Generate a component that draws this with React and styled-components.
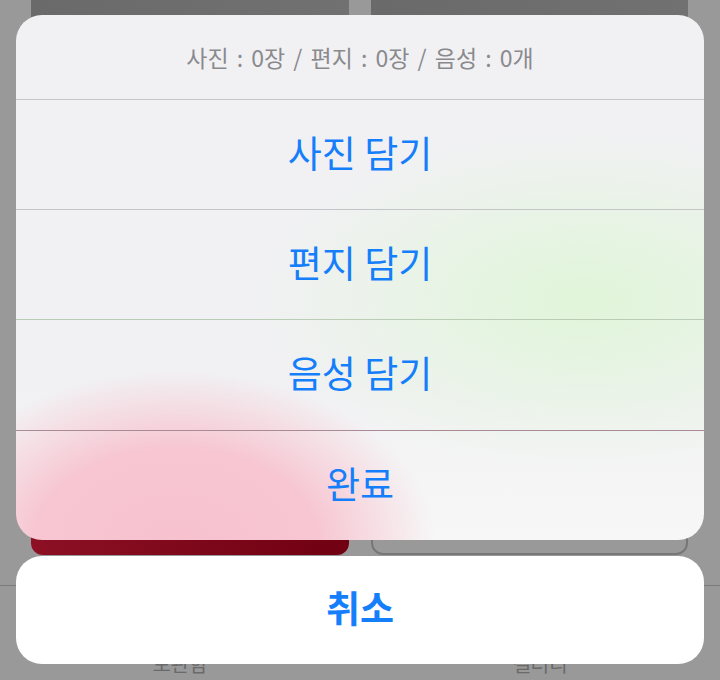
import React from 'react';
import styled, { createGlobalStyle } from 'styled-components';

const GlobalStyle = createGlobalStyle`
  html, body {
    margin: 0;
    padding: 0;
    background: #999999;
  }

  body {
    font-family: "Noto Sans CJK KR", "Noto Sans", sans-serif;
  }

  * {
    box-sizing: border-box;
  }
`;

const Screen = styled.div`
  position: relative;
  width: 720px;
  height: 680px;
  overflow: hidden;
  background: #999999;
`;

// dimmed app content behind the sheet
const Backdrop = styled.div`
  height: 100%;
  display: flex;
  flex-direction: column;
`;

const CardRow = styled.div`
  display: grid;
  grid-template-columns: 318px 317px;
  column-gap: 22px;
  padding: 0 32px 0 31px;
`;

const TopCard = styled.div`
  height: 40px;
  background: linear-gradient(90deg, #6a6a6a, #717171);
`;

const Filler = styled.div`
  flex: 1;
`;

const ActionRow = styled.div`
  display: grid;
  grid-template-columns: 318px 317px;
  column-gap: 22px;
  padding: 0 32px 0 31px;
`;

const RedButton = styled.div`
  height: 60px;
  border-radius: 12px;
  background: linear-gradient(90deg, #8d1024, #700012);
`;

const GhostButton = styled.div`
  height: 60px;
  border-radius: 12px;
  border: 2px solid #777777;
  background: #999999;
`;

const TabBar = styled.div`
  margin-top: 30px;
  height: 95px;
  border-top: 1px solid #7c7c7c;
  display: grid;
  grid-template-columns: 1fr 1fr;
`;

const TabLabel = styled.div`
  padding-top: 66px;
  text-align: center;
  font-size: 20px;
  line-height: 24px;
  color: #6a6a6a;
`;

const Sheet = styled.div`
  position: absolute;
  left: 16px;
  right: 16px;
  top: 15px;
  display: flex;
  flex-direction: column;
  gap: 16px;
`;

const Group = styled.div`
  border-radius: 26px;
  overflow: hidden;
  background:
    radial-gradient(ellipse 260px 175px at 160px 530px, rgba(247, 193, 206, 1), rgba(247, 193, 206, 0.9) 55%, rgba(247, 193, 206, 0) 100%),
    radial-gradient(ellipse 330px 170px at 570px 285px, rgba(222, 246, 214, 0.9), rgba(222, 246, 214, 0) 100%),
    linear-gradient(180deg, #f1f1f3 0%, #f1f1f3 70%, #f7f7f7 100%);
  display: flex;
  flex-direction: column;
`;

const Header = styled.div`
  height: 84px;
  display: flex;
  align-items: center;
  justify-content: center;
  font-size: 23px;
  word-spacing: 3px;
  color: #8a8a8e;
`;

const Option = styled.div`
  height: ${(p) => p.h || 110}px;
  padding-bottom: 6px;
  border-top: 1px solid ${(p) => p.line || '#c5c5c9'};
  display: flex;
  align-items: center;
  justify-content: center;
  font-size: 37px;
  color: #157efb;
`;

const Cancel = styled.div`
  height: 108px;
  padding-bottom: 6px;
  border-radius: 26px;
  background: #ffffff;
  display: flex;
  align-items: center;
  justify-content: center;
  font-size: 37px;
  font-weight: 700;
  color: #157efb;
`;

const options = [
  { label: '사진 담기' },
  { label: '편지 담기' },
  { label: '음성 담기', line: '#b9cdb5', h: 111 },
  { label: '완료', line: '#a98a96' },
];

export default function App() {
  return (
    <Screen>
      <GlobalStyle />
      <Backdrop>
        <CardRow>
          <TopCard />
          <TopCard />
        </CardRow>
        <Filler />
        <ActionRow>
          <RedButton />
          <GhostButton />
        </ActionRow>
        <TabBar>
          <TabLabel>보관함</TabLabel>
          <TabLabel>갤러리</TabLabel>
        </TabBar>
      </Backdrop>

      <Sheet>
        <Group>
          <Header>사진 : 0장 / 편지 : 0장 / 음성 : 0개</Header>
          {options.map((o) => (
            <Option key={o.label} line={o.line} h={o.h}>{o.label}</Option>
          ))}
        </Group>
        <Cancel>취소</Cancel>
      </Sheet>
    </Screen>
  );
}
